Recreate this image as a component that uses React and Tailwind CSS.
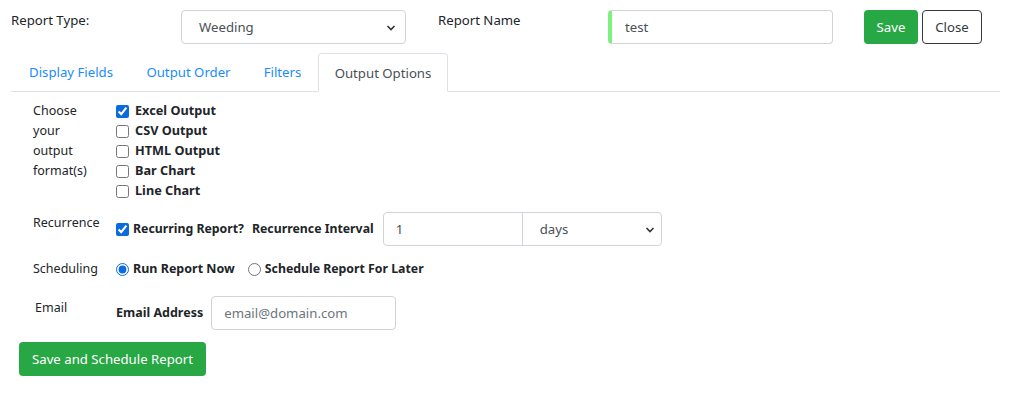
import React from "react";

const font = { fontFamily: '"Noto Sans", "Open Sans", sans-serif' };

function Check({ checked, label }) {
  return (
    <label className="flex items-center h-[20px] font-bold text-[12.7px] text-[#212529]">
      <input type="checkbox" defaultChecked={checked} className="w-[13px] h-[13px] m-0 mr-[6px] accent-[#0b6bde]" />
      {label}
    </label>
  );
}

export default function App() {
  return (
    <div className="w-[1011px] h-[399px] bg-white text-[#212529] text-[12.5px]" style={font}>
      {/* Top row */}
      <div className="flex items-start pt-[10px] px-[11px]">
        <div className="w-[170px] pt-[1px] text-[13.2px]">Report Type:</div>
        <div className="relative w-[225px] h-[34px] border border-[#ced4da] rounded-[4px] flex items-center pl-[17px] pt-[2px] text-[13.2px] text-[#495057]">
          Weeding
          <svg className="absolute right-[9px] top-[13px]" width="10" height="8" viewBox="0 0 10 8">
            <path d="M1.5 2 L5 5.5 L8.5 2" fill="none" stroke="#333" strokeWidth="1.6" />
          </svg>
        </div>
        <div className="ml-[32px] w-[170px] pt-[1px] text-[13.2px]">Report Name</div>
        <div className="w-[225px] h-[34px] border border-[#ced4da] border-l-[4px] border-l-[#7cf27c] rounded-[4px] flex items-center pl-[13px] pt-[2px] text-[13.2px] text-[#495057]">
          test
        </div>
        <button className="ml-[31px] w-[54px] h-[34px] pt-[2px] bg-[#28a745] text-white rounded-[4px] text-[13.2px]">Save</button>
        <button className="ml-[4px] w-[60px] h-[34px] pt-[2px] border border-[#343a40] text-[#343a40] rounded-[4px] text-[13.2px]">Close</button>
      </div>

      {/* Tabs */}
      <div className="mx-[11px] mt-[9px] flex border-b border-[#dee2e6] h-[39px] pl-[1px]">
        <div className="w-[118px] pt-[2px] flex items-center justify-center text-[13.2px] text-[#1a8cff]">Display Fields</div>
        <div className="w-[117px] pt-[2px] flex items-center justify-center text-[13.2px] text-[#1a8cff]">Output Order</div>
        <div className="w-[71px] pt-[2px] flex items-center justify-center text-[13.2px] text-[#1a8cff]">Filters</div>
        <div className="w-[130px] pt-[2px] flex items-center justify-center text-[13.2px] text-[#495057] border border-[#dee2e6] border-b-white rounded-t-[4px] -mb-[1px] bg-white">Output Options</div>
      </div>

      {/* Content */}
      <div className="pl-[33px] pt-[9px]">
        <div className="flex">
          <div className="w-[83px] leading-[20px]">
            <div>Choose</div>
            <div>your</div>
            <div>output</div>
            <div>format(s)</div>
          </div>
          <div className="flex flex-col">
            <Check checked label="Excel Output" />
            <Check label="CSV Output" />
            <Check label="HTML Output" />
            <Check label="Bar Chart" />
            <Check label="Line Chart" />
          </div>
        </div>

        <div className="flex mt-[11px]">
          <div className="w-[83px] pt-[1px] leading-[20px]">Recurrence</div>
          <div className="flex items-center h-[34px] font-bold text-[12.3px]">
            <input type="checkbox" defaultChecked className="w-[13px] h-[13px] m-0 mr-[4px] accent-[#0b6bde]" />
            <span>Recurring Report?</span>
            <span className="ml-[8px]">Recurrence Interval</span>
            <div className="ml-[9px] flex h-[34px] w-[279px] border border-[#ced4da] rounded-[4px] font-normal text-[13.2px] text-[#495057]">
              <div className="w-[139px] border-r border-[#ced4da] flex items-center pl-[12px] pt-[2px]">1</div>
              <div className="relative flex-1 flex items-center pl-[17px] pt-[2px]">
                days
                <svg className="absolute right-[6px] top-[13px]" width="10" height="8" viewBox="0 0 10 8">
                  <path d="M1.5 2 L5 5.5 L8.5 2" fill="none" stroke="#333" strokeWidth="1.6" />
                </svg>
              </div>
            </div>
          </div>
        </div>

        <div className="flex items-center mt-[13px] h-[20px]">
          <div className="w-[83px]">Scheduling</div>
          <label className="flex items-center font-bold text-[12.5px]">
            <input type="radio" name="s" defaultChecked className="w-[13px] h-[13px] m-0 mr-[4px] accent-[#0b6bde]" />
            Run Report Now
          </label>
          <label className="flex items-center font-bold ml-[13px] text-[12.3px]">
            <input type="radio" name="s" className="w-[13px] h-[13px] m-0 mr-[4px] accent-[#0b6bde]" />
            Schedule Report For Later
          </label>
        </div>

        <div className="flex mt-[19px]">
          <div className="w-[83px] pt-[1px] pl-[2px]">Email</div>
          <div className="flex items-center mt-[-2px]">
            <span className="font-bold text-[12.5px] pt-[1px]">Email Address</span>
            <div className="ml-[8px] w-[185px] h-[34px] border border-[#ced4da] rounded-[4px] flex items-center pl-[12px] pt-[2px] text-[13.2px] text-[#6c757d]">
              email@domain.com
            </div>
          </div>
        </div>
      </div>

      <div className="pl-[19px] mt-[12px]">
        <button className="w-[187px] h-[34px] pt-[2px] bg-[#28a745] text-white rounded-[4px] text-[13.2px]">Save and Schedule Report</button>
      </div>
    </div>
  );
}
